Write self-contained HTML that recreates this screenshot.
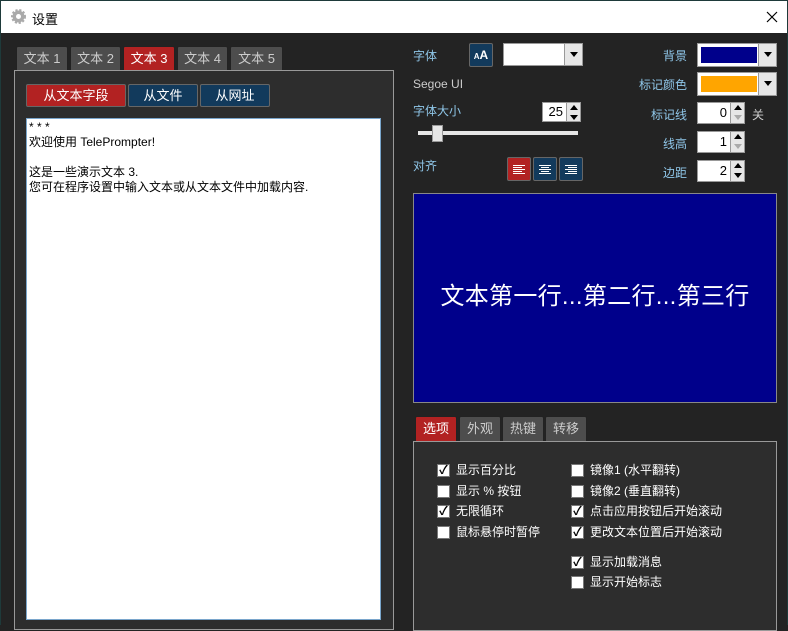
<!DOCTYPE html>
<html><head><meta charset="utf-8"><style>
*{box-sizing:border-box;margin:0;padding:0}
body{width:788px;height:625px;overflow:hidden;background:#232323;font-family:"Liberation Sans","Noto Sans CJK SC",sans-serif;font-size:12px;position:relative}
.a{position:absolute}
.tb{left:0;top:0;width:788px;height:33px;background:#fff;border:1px solid #1e3a3a;border-bottom:none}
.tab{position:absolute;top:46px;height:24px;background:#4d4d4d;color:#ccc;border:1px solid #222;border-bottom:none;text-align:center;line-height:23px;font-size:13px;border-radius:2px 2px 0 0}
.red{background:#b22222;color:#fff}
.btn{position:absolute;height:23px;border:1px solid #666;color:#fff;text-align:center;line-height:21px;font-size:13px;border-radius:2px}
.blue{background:#123a5c}
.lbl{position:absolute;color:#8fc6e8;font-size:12px}
.spin{position:absolute;background:#fff;border:1px solid #999;height:22px;width:34px;text-align:right;padding-right:3px;line-height:20px;font-size:13px}
.sb{position:absolute;width:15px;height:22px;background:#e6e6e6;border:1px solid #999}
.sb:before{content:"";position:absolute;left:3px;top:2px;border:4px solid transparent;border-bottom:5px solid #000;border-top:none}
.sb:after{content:"";position:absolute;left:3px;top:12px;border:4px solid transparent;border-top:5px solid #000;border-bottom:none}
.sb.dis:after{border-top-color:#aaa}
.cb{position:absolute;width:13px;height:13px;background:#fff;border:1px solid #777;color:#000;font-size:12px;line-height:11px;text-align:center;font-weight:bold}
.ct{position:absolute;color:#fff;font-size:12px;line-height:14px}
.arr{position:absolute;width:18px;background:#e6e6e6;border-left:1px solid #999}
.arr:after{content:"";position:absolute;left:5px;top:8px;border:4px solid transparent;border-top:5px solid #000;border-bottom:none}
.al{position:absolute;top:157px;width:24px;height:24px;border:1px solid #666;border-radius:2px}
.al i{position:absolute;height:1px;background:#fff}
</style></head><body>
<div class="a tb"></div>
<svg class="a" style="left:10px;top:8px" width="17" height="17" viewBox="0 0 17 17"><circle cx="8.5" cy="8.5" r="6" fill="#aaa" stroke="#aaa" stroke-width="3" stroke-dasharray="2 1.6"/><circle cx="8.5" cy="8.5" r="2.5" fill="#fff"/></svg>
<div class="a" style="left:32px;top:9px;font-size:13px;color:#000">设置</div>
<svg class="a" style="left:766px;top:11px" width="12" height="12" viewBox="0 0 12 12"><path d="M1 1L11 11M11 1L1 11" stroke="#000" stroke-width="1.2"/></svg>
<div class="a" style="left:0;top:33px;width:1px;height:592px;background:#1e3a3a"></div>
<div class="a" style="left:787px;top:33px;width:1px;height:592px;background:#1e3a3a"></div>

<div class="tab" style="left:16px;width:52px">文本 1</div>
<div class="tab" style="left:70px;width:51px">文本 2</div>
<div class="tab red" style="left:123px;width:52px">文本 3</div>
<div class="tab" style="left:177px;width:51px">文本 4</div>
<div class="tab" style="left:230px;width:53px">文本 5</div>
<div class="a" style="left:14px;top:70px;width:380px;height:560px;background:#2d2d2d;border:1px solid #999"></div>
<div class="btn red" style="left:26px;top:84px;width:100px">从文本字段</div>
<div class="btn blue" style="left:128px;top:84px;width:70px">从文件</div>
<div class="btn blue" style="left:200px;top:84px;width:70px">从网址</div>
<div class="a" style="left:26px;top:118px;width:355px;height:502px;background:#fff;border:1px solid #7aa6cc;padding:1px 2px;font-size:12px;line-height:15px;color:#000">* * *<br>欢迎使用 TelePrompter!<br><br>这是一些演示文本 3.<br>您可在程序设置中输入文本或从文本文件中加载内容.</div>

<div class="lbl" style="left:413px;top:47px">字体</div>
<div class="a" style="left:469px;top:43px;width:24px;height:24px;background:#123a5c;border:1px solid #666;border-radius:2px;color:#fff;font-size:12px;text-align:center;line-height:22px;font-weight:bold"><span style="font-size:8px">A</span>A</div>
<div class="a" style="left:503px;top:43px;width:80px;height:23px;background:#fff;border:1px solid #999"><div class="arr" style="right:0;top:0;height:21px"></div></div>
<div class="a" style="left:413px;top:77px;color:#ccc;font-size:12px">Segoe UI</div>
<div class="lbl" style="left:413px;top:102px">字体大小</div>
<div class="spin" style="left:542px;top:102px;width:25px;height:20px;line-height:18px">25</div>
<div class="sb" style="left:566px;top:102px;height:20px"></div>
<div class="a" style="left:418px;top:131px;width:160px;height:4px;background:#e6e6e6"></div>
<div class="a" style="left:432px;top:125px;width:11px;height:17px;background:#e6e6e6;border:1px solid #999"></div>
<div class="lbl" style="left:413px;top:157px">对齐</div>
<div class="al" style="left:507px;background:#b22222"><i style="left:5px;top:7px;width:12px"></i><i style="left:5px;top:9px;width:9px"></i><i style="left:5px;top:11px;width:12px"></i><i style="left:5px;top:13px;width:9px"></i><i style="left:5px;top:15px;width:12px"></i></div>
<div class="al" style="left:533px;background:#123a5c"><i style="left:5px;top:7px;width:12px"></i><i style="left:7px;top:9px;width:8px"></i><i style="left:5px;top:11px;width:12px"></i><i style="left:7px;top:13px;width:8px"></i><i style="left:5px;top:15px;width:12px"></i></div>
<div class="al" style="left:559px;background:#123a5c"><i style="left:5px;top:7px;width:12px"></i><i style="left:8px;top:9px;width:9px"></i><i style="left:5px;top:11px;width:12px"></i><i style="left:8px;top:13px;width:9px"></i><i style="left:5px;top:15px;width:12px"></i></div>

<div class="lbl" style="left:663px;top:47px">背景</div>
<div class="a" style="left:697px;top:43px;width:80px;height:24px;background:#fff;border:1px solid #999"><div class="a" style="left:3px;top:3px;width:56px;height:16px;background:#00008b"></div><div class="arr" style="right:0;top:0;height:22px"></div></div>
<div class="lbl" style="left:639px;top:76px">标记颜色</div>
<div class="a" style="left:697px;top:72px;width:80px;height:24px;background:#fff;border:1px solid #999"><div class="a" style="left:3px;top:3px;width:56px;height:16px;background:#ffa500"></div><div class="arr" style="right:0;top:0;height:22px"></div></div>
<div class="lbl" style="left:651px;top:106px">标记线</div>
<div class="spin" style="left:697px;top:102px">0</div><div class="sb dis" style="left:730px;top:102px"></div>
<div class="a" style="left:752px;top:106px;color:#ccc">关</div>
<div class="lbl" style="left:663px;top:135px">线高</div>
<div class="spin" style="left:697px;top:131px">1</div><div class="sb dis" style="left:730px;top:131px"></div>
<div class="lbl" style="left:663px;top:164px">边距</div>
<div class="spin" style="left:697px;top:160px">2</div><div class="sb" style="left:730px;top:160px"></div>

<div class="a" style="left:413px;top:193px;width:364px;height:210px;background:#00008b;border:1px solid #888"></div>
<div class="a" style="left:413px;top:282px;width:364px;text-align:center;color:#fff;font-size:24px;line-height:30px;letter-spacing:0.3px">文本第一行...第二行...第三行</div>

<div class="tab red" style="left:415px;top:416px;height:25px;width:42px">选项</div>
<div class="tab" style="left:459px;top:416px;height:25px;width:42px">外观</div>
<div class="tab" style="left:502px;top:416px;height:25px;width:42px">热键</div>
<div class="tab" style="left:545px;top:416px;height:25px;width:42px">转移</div>
<div class="a" style="left:413px;top:441px;width:364px;height:190px;background:#2d2d2d;border:1px solid #999"></div>

<div class="cb" style="left:437px;top:464px">✓</div><div class="ct" style="left:456px;top:463px">显示百分比</div>
<div class="cb" style="left:437px;top:485px"></div><div class="ct" style="left:456px;top:484px">显示 % 按钮</div>
<div class="cb" style="left:437px;top:505px">✓</div><div class="ct" style="left:456px;top:504px">无限循环</div>
<div class="cb" style="left:437px;top:526px"></div><div class="ct" style="left:456px;top:525px">鼠标悬停时暂停</div>
<div class="cb" style="left:571px;top:464px"></div><div class="ct" style="left:590px;top:463px">镜像1 (水平翻转)</div>
<div class="cb" style="left:571px;top:485px"></div><div class="ct" style="left:590px;top:484px">镜像2 (垂直翻转)</div>
<div class="cb" style="left:571px;top:505px">✓</div><div class="ct" style="left:590px;top:504px">点击应用按钮后开始滚动</div>
<div class="cb" style="left:571px;top:526px">✓</div><div class="ct" style="left:590px;top:525px">更改文本位置后开始滚动</div>
<div class="cb" style="left:571px;top:556px">✓</div><div class="ct" style="left:590px;top:555px">显示加载消息</div>
<div class="cb" style="left:571px;top:576px"></div><div class="ct" style="left:590px;top:575px">显示开始标志</div>
</body></html>
